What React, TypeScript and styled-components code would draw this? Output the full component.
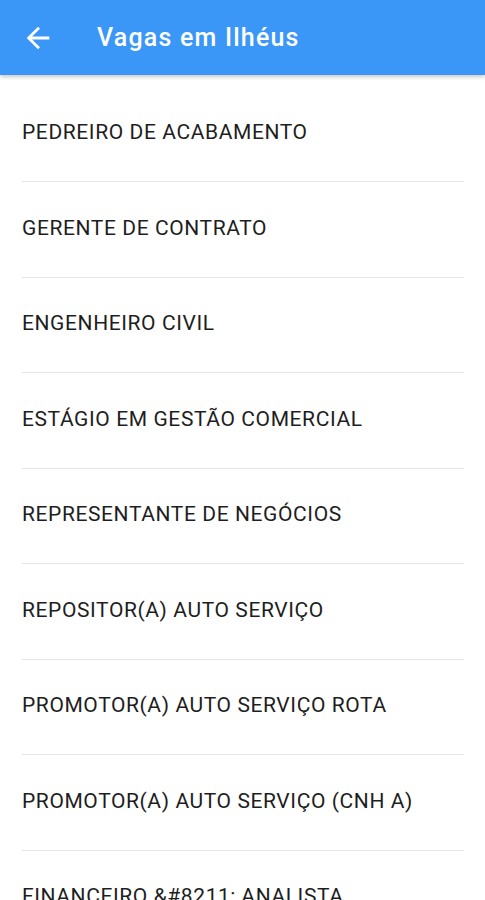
import React from 'react';
import styled, { createGlobalStyle } from 'styled-components';

const GlobalStyle = createGlobalStyle`
  *, *::before, *::after {
    box-sizing: border-box;
  }

  body {
    margin: 0;
    background: #ffffff;
    font-family: Roboto, 'Noto Sans', Arial, sans-serif;
  }
`;

const Screen = styled.div`
  width: 485px;
  height: 900px;
  overflow: hidden;
  background: #ffffff;
`;

const TopBar = styled.header`
  display: flex;
  align-items: center;
  height: 75px;
  padding-left: 21px;
  background-color: #3a97f7;
  box-shadow: 0 2px 4px rgba(0, 0, 0, 0.22);
  position: relative;
  z-index: 1;
`;

const BackButton = styled.button`
  display: flex;
  align-items: center;
  justify-content: center;
  width: 34px;
  height: 34px;
  padding: 0;
  border: 0;
  background: none;
  cursor: pointer;
`;

const Title = styled.h1`
  margin: 0 0 0 42px;
  color: #ffffff;
  font-size: 25px;
  font-weight: 500;
  letter-spacing: 1.2px;
`;

const JobList = styled.ul`
  list-style: none;
  margin: 0;
  padding: 11.5px 21px 0 22px;
`;

const JobItem = styled.li`
  display: flex;
  align-items: center;
  height: 95.5px;
  padding-bottom: 3px;
  border-bottom: 1.5px solid #e6e6e6;
  color: #1e1e1e;
  font-size: 21px;
  letter-spacing: 0.6px;
  white-space: nowrap;
  cursor: pointer;
`;

const jobs = [
  'PEDREIRO DE ACABAMENTO',
  'GERENTE DE CONTRATO',
  'ENGENHEIRO CIVIL',
  'ESTÁGIO EM GESTÃO COMERCIAL',
  'REPRESENTANTE DE NEGÓCIOS',
  'REPOSITOR(A) AUTO SERVIÇO',
  'PROMOTOR(A) AUTO SERVIÇO ROTA',
  'PROMOTOR(A) AUTO SERVIÇO (CNH A)',
  'FINANCEIRO &#8211; ANALISTA',
];

export default function App() {
  return (
    <Screen>
      <GlobalStyle />
      <TopBar>
        <BackButton aria-label='Voltar'>
          <svg width='34' height='34' viewBox='0 0 24 24' fill='#ffffff'>
            <path d='M20 11H7.83l5.59-5.59L12 4l-8 8 8 8 1.41-1.41L7.83 13H20v-2z' />
          </svg>
        </BackButton>
        <Title>Vagas em Ilhéus</Title>
      </TopBar>
      <JobList>
        {jobs.map(job => (
          <JobItem key={job}>{job}</JobItem>
        ))}
      </JobList>
    </Screen>
  );
}
